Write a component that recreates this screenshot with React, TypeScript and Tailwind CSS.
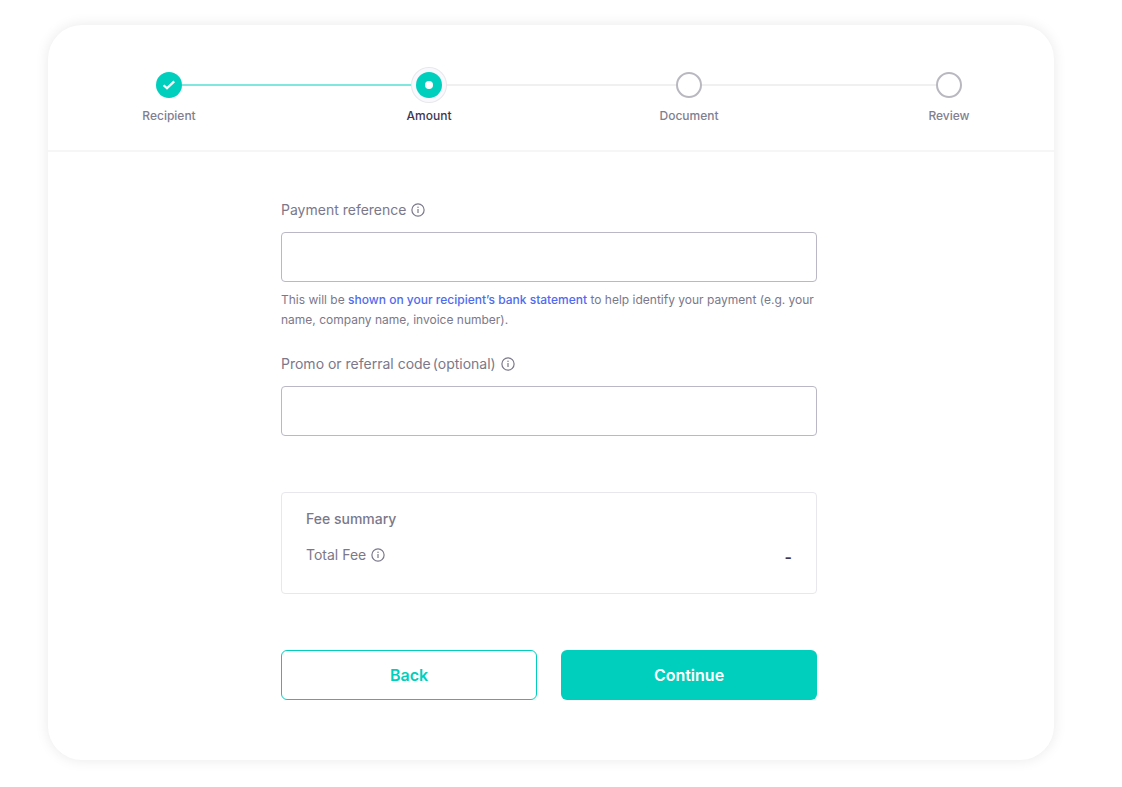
import { Fragment } from "react";
import type { ReactNode } from "react";
import clsx from "clsx";

type StepState = "done" | "current" | "upcoming";

const STEPS: { label: string; state: StepState }[] = [
  { label: "Recipient", state: "done" },
  { label: "Amount", state: "current" },
  { label: "Document", state: "upcoming" },
  { label: "Review", state: "upcoming" },
];

function InfoIcon() {
  return (
    <svg width="14" height="14" viewBox="0 0 14 14" fill="none" className="shrink-0" aria-hidden="true">
      <circle cx="7" cy="7" r="6.1" stroke="currentColor" strokeWidth="1.2" />
      <path d="M7 6v4" stroke="currentColor" strokeWidth="1.2" />
      <circle cx="7" cy="4.3" r="0.75" fill="currentColor" />
    </svg>
  );
}

function StepDot({ state }: { state: StepState }) {
  if (state === "done") {
    return (
      <span className="flex size-[26px] items-center justify-center rounded-full bg-[#00cfbd]">
        <svg width="14" height="12" viewBox="0 0 14 12" fill="none" aria-hidden="true">
          <path d="M1.6 6.2 5 9.3 12.2 2.4" stroke="white" strokeWidth="2.2" />
        </svg>
      </span>
    );
  }
  if (state === "current") {
    return (
      <span className="flex size-[26px] items-center justify-center rounded-full bg-[#00cfbd] shadow-[0_0_0_4px_#f9f8fc,0_0_0_5px_#e8e8ec]">
        <span className="size-2 rounded-full bg-white" />
      </span>
    );
  }
  return <span className="size-[26px] rounded-full border-2 border-[#b9b8c1] bg-white" />;
}

function Stepper() {
  return (
    <ol className="flex items-start pt-[47px] pr-[92px] pb-6 pl-[108px]">
      {STEPS.map((step, i) => (
        <Fragment key={step.label}>
          {i > 0 && (
            <li
              aria-hidden="true"
              className={clsx("mt-3 h-0.5 flex-1", step.state === "current" ? "bg-[#80e7de]" : "bg-[#f0f0f0]")}
            />
          )}
          <li
            aria-current={step.state === "current" ? "step" : undefined}
            className="z-10 flex w-[26px] flex-col items-center gap-2"
          >
            <StepDot state={step.state} />
            <span
              className={clsx(
                "text-xs leading-5 font-medium whitespace-nowrap",
                step.state === "current" ? "text-[#3d3654]" : "text-[#817e90]",
              )}
            >
              {step.label}
            </span>
          </li>
        </Fragment>
      ))}
    </ol>
  );
}

function Field({
  id,
  label,
  optional,
  children,
}: {
  id: string;
  label: string;
  optional?: boolean;
  children?: ReactNode;
}) {
  return (
    <div>
      <div className="flex items-center gap-[5px]">
        <label htmlFor={id} className="flex gap-0.5 text-sm leading-5">
          <span>{label}</span>
          {optional && <span>(optional)</span>}
        </label>
        <InfoIcon />
      </div>
      <input
        id={id}
        type="text"
        className="mt-3 block h-[50px] w-full rounded border border-[#b9b8c4] bg-white px-4 text-base text-[#3d3654] outline-none focus:border-[#00cfbd]"
      />
      {children}
    </div>
  );
}

export default function App() {
  return (
    <div className="min-h-screen bg-white pt-[25px] pr-[68px] pb-7 pl-12 font-['Inter','Liberation_Sans',sans-serif] text-[#7b788a]">
      <main className="rounded-[34px] bg-white shadow-[0_0_14px_rgba(0,0,0,0.09)]">
        <header className="border-b-2 border-[#f6f6f6]">
          <Stepper />
        </header>

        <form className="mx-auto w-full max-w-[540px] pt-12 pr-1 pb-[60px]" onSubmit={(e) => e.preventDefault()}>
          <Field id="reference" label="Payment reference">
            <p className="mt-2 text-xs leading-5">
              This will be{" "}
              <strong className="font-medium text-[#4f6bee]">shown on your recipient’s bank statement</strong> to help
              identify your payment (e.g. your name, company name, invoice number).
            </p>
          </Field>

          <div className="mt-6">
            <Field id="promo" label="Promo or referral code" optional />
          </div>

          <section className="mt-14 rounded border border-[#e8e8ec] px-6 pt-4 pb-[26px]">
            <h2 className="text-sm leading-5 font-medium">Fee summary</h2>
            <div className="mt-4 flex items-end justify-between">
              <div className="flex items-center gap-[5px] pb-0.5 text-sm leading-5">
                Total Fee
                <InfoIcon />
              </div>
              <span className="text-base leading-5 font-semibold text-[#3d3654]">-</span>
            </div>
          </section>

          <div className="mt-14 grid grid-cols-2 gap-6">
            <button
              type="button"
              className="h-[50px] rounded-md border border-[#00cfbd] bg-white text-base font-semibold text-[#00cfbd]"
            >
              Back
            </button>
            <button type="submit" className="h-[50px] rounded-md bg-[#00cfbd] text-base font-semibold text-white">
              Continue
            </button>
          </div>
        </form>
      </main>
    </div>
  );
}
